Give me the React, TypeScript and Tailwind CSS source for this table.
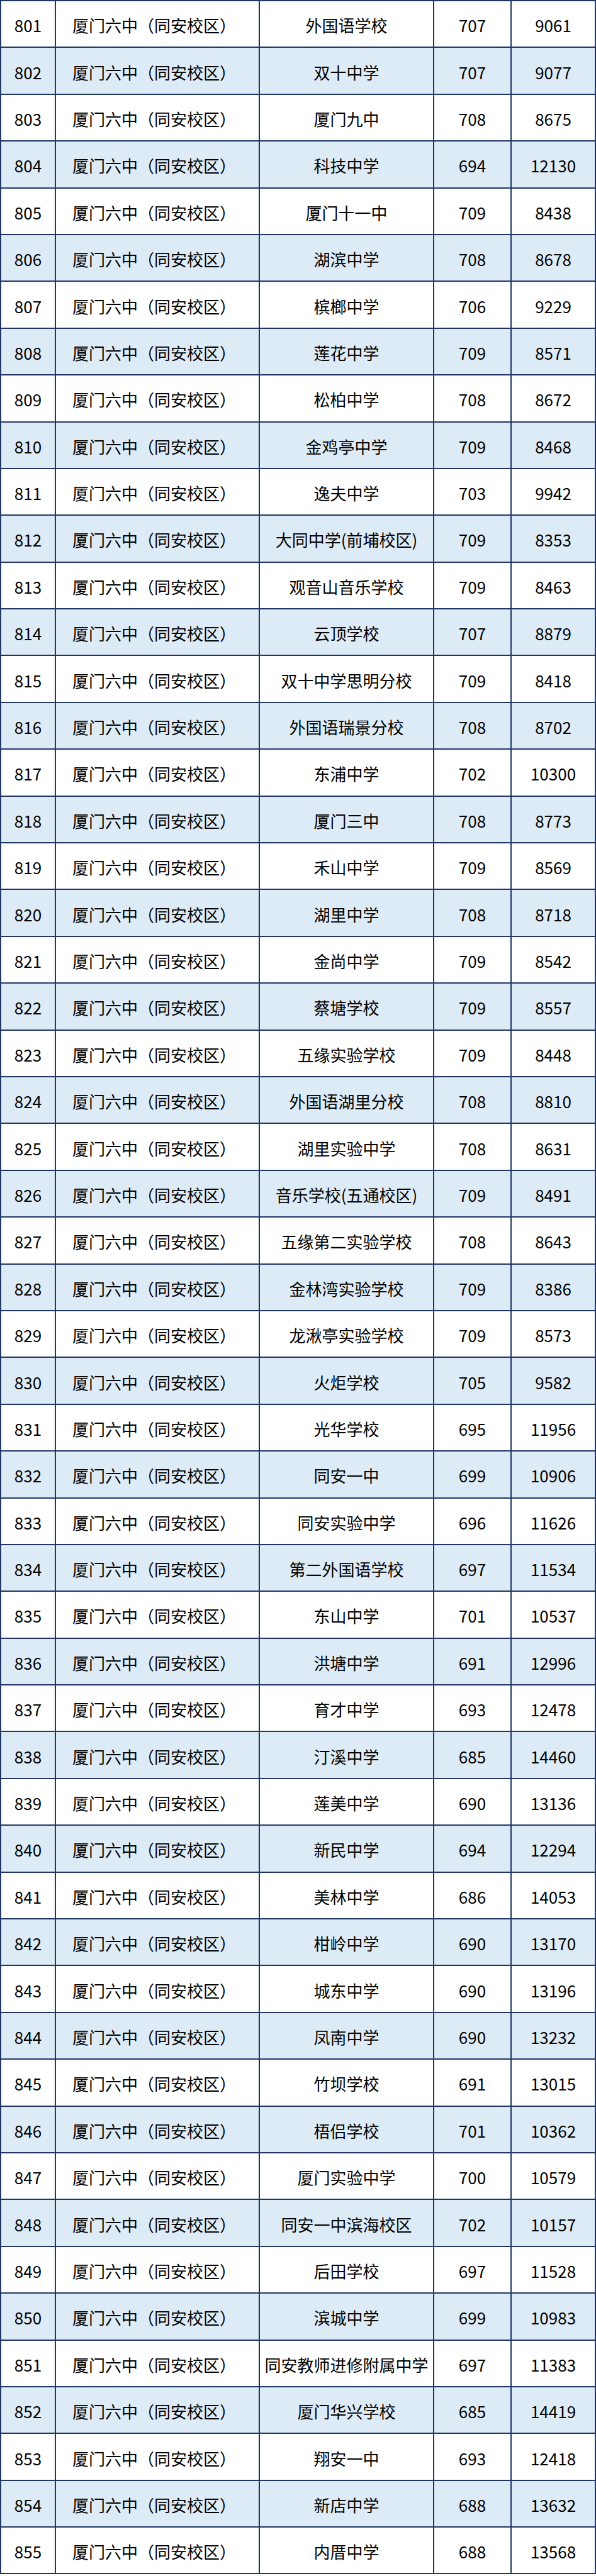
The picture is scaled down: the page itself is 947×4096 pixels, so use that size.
import React from "react";

const rows: [number, string, number, number][] = [
  [801, "外国语学校", 707, 9061],
  [802, "双十中学", 707, 9077],
  [803, "厦门九中", 708, 8675],
  [804, "科技中学", 694, 12130],
  [805, "厦门十一中", 709, 8438],
  [806, "湖滨中学", 708, 8678],
  [807, "槟榔中学", 706, 9229],
  [808, "莲花中学", 709, 8571],
  [809, "松柏中学", 708, 8672],
  [810, "金鸡亭中学", 709, 8468],
  [811, "逸夫中学", 703, 9942],
  [812, "大同中学(前埔校区)", 709, 8353],
  [813, "观音山音乐学校", 709, 8463],
  [814, "云顶学校", 707, 8879],
  [815, "双十中学思明分校", 709, 8418],
  [816, "外国语瑞景分校", 708, 8702],
  [817, "东浦中学", 702, 10300],
  [818, "厦门三中", 708, 8773],
  [819, "禾山中学", 709, 8569],
  [820, "湖里中学", 708, 8718],
  [821, "金尚中学", 709, 8542],
  [822, "蔡塘学校", 709, 8557],
  [823, "五缘实验学校", 709, 8448],
  [824, "外国语湖里分校", 708, 8810],
  [825, "湖里实验中学", 708, 8631],
  [826, "音乐学校(五通校区)", 709, 8491],
  [827, "五缘第二实验学校", 708, 8643],
  [828, "金林湾实验学校", 709, 8386],
  [829, "龙湫亭实验学校", 709, 8573],
  [830, "火炬学校", 705, 9582],
  [831, "光华学校", 695, 11956],
  [832, "同安一中", 699, 10906],
  [833, "同安实验中学", 696, 11626],
  [834, "第二外国语学校", 697, 11534],
  [835, "东山中学", 701, 10537],
  [836, "洪塘中学", 691, 12996],
  [837, "育才中学", 693, 12478],
  [838, "汀溪中学", 685, 14460],
  [839, "莲美中学", 690, 13136],
  [840, "新民中学", 694, 12294],
  [841, "美林中学", 686, 14053],
  [842, "柑岭中学", 690, 13170],
  [843, "城东中学", 690, 13196],
  [844, "凤南中学", 690, 13232],
  [845, "竹坝学校", 691, 13015],
  [846, "梧侣学校", 701, 10362],
  [847, "厦门实验中学", 700, 10579],
  [848, "同安一中滨海校区", 702, 10157],
  [849, "后田学校", 697, 11528],
  [850, "滨城中学", 699, 10983],
  [851, "同安教师进修附属中学", 697, 11383],
  [852, "厦门华兴学校", 685, 14419],
  [853, "翔安一中", 693, 12418],
  [854, "新店中学", 688, 13632],
  [855, "内厝中学", 688, 13568],
];

export default function App() {
  return (
    <div className="w-[947px] bg-white">
      <div
        className="grid w-[947px] grid-cols-[85px_322px_275px_121px_132px] auto-rows-[72.4px] gap-[2px] bg-[#203764] p-[2px] text-[26px] text-black"
        style={{ fontFamily: '"Noto Sans CJK SC", "Noto Sans", sans-serif' }}
      >
        {rows.map(([n, school, score, rank], i) => {
          const bg = i % 2 === 1 ? "bg-[#ddebf7]" : "bg-white";
          return (
            <React.Fragment key={n}>
              <div className={`${bg} flex items-center justify-center pt-[3px]`}>{n}</div>
              <div className={`${bg} flex items-center justify-center pt-[3px] pr-[10px]`}>厦门六中（同安校区）</div>
              <div className={`${bg} flex items-center justify-center whitespace-nowrap pt-[3px]`}>{school}</div>
              <div className={`${bg} flex items-center justify-center pt-[3px]`}>{score}</div>
              <div className={`${bg} flex items-center justify-center pt-[3px]`}>{rank}</div>
            </React.Fragment>
          );
        })}
      </div>
    </div>
  );
}
